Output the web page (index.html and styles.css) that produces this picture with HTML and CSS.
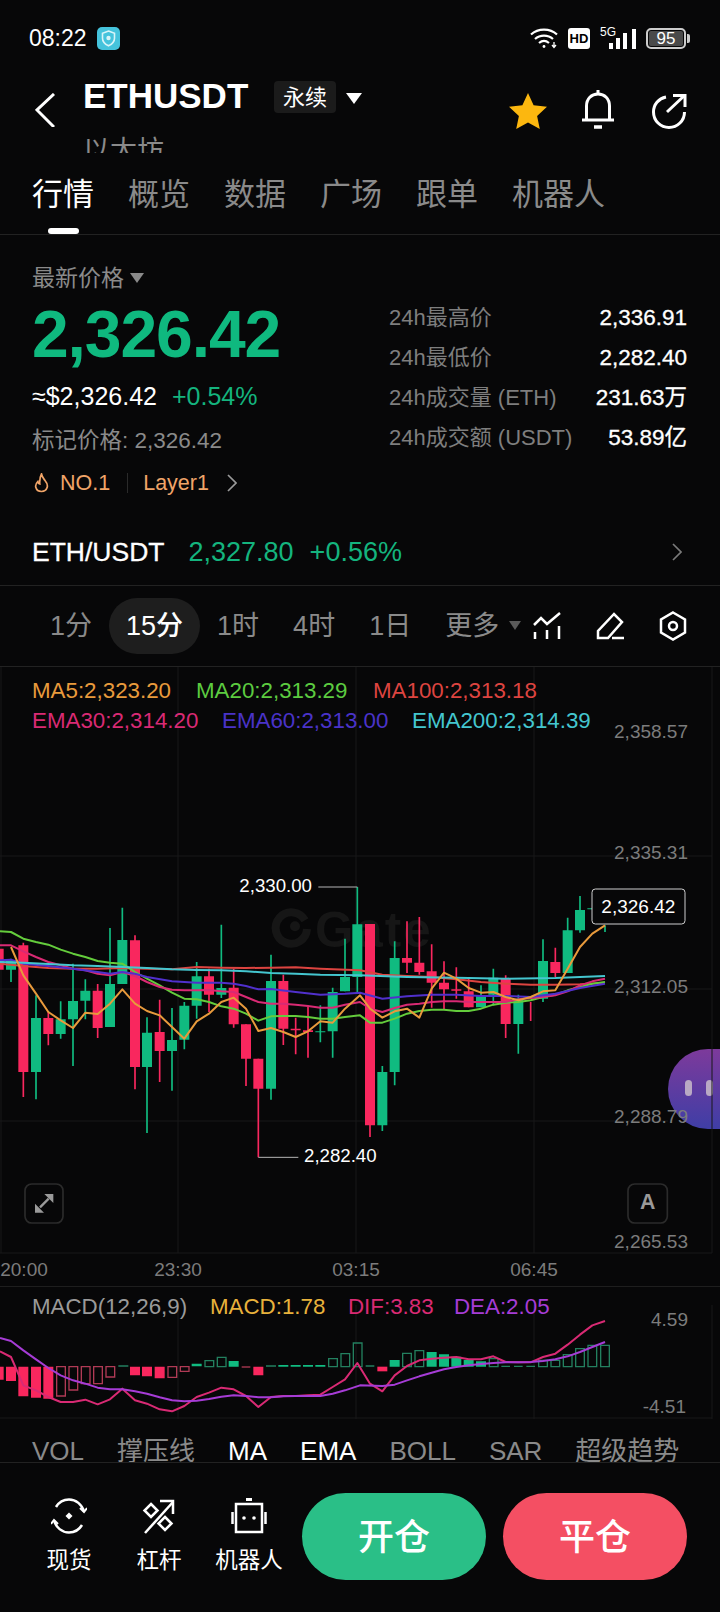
FILE: index.html
```html
<!DOCTYPE html>
<html>
<head>
    <meta charset="utf-8">
    <title>ETHUSDT</title>
    <link rel="stylesheet" href="styles.css">
</head>
<body>
<div class="status-bar">
    <div class="status-left">
        <span class="clock">08:22</span>
        <svg class="shield-app" viewBox="0 0 23 23">
            <rect width="23" height="23" rx="5" fill="#45c3dc"/>
            <path d="M11.5 4l6 2.2v5c0 3.6-2.6 6-6 7.6-3.4-1.6-6-4-6-7.6v-5z" fill="none" stroke="#d8f4f8" stroke-width="1.6"/>
            <circle cx="11.5" cy="11" r="2.2" fill="#d8f4f8"/>
        </svg>
    </div>
    <div class="status-right">
        <svg class="wifi" viewBox="0 0 28 22" fill="none" stroke="#fff" stroke-width="2.2">
            <path d="M1 7.5C8 1 20 1 27 7.5"/>
            <path d="M5 12c5-4.500 13-4.500 18 0"/>
            <path d="M9 16c3-2.500 7-2.500 10 0"/>
            <circle cx="14" cy="19.500" r="1.400" fill="#fff" stroke="none"/>
            <path d="M24 15v5M22 18l2 2.500 2-2.500" stroke-width="1.300"/>
        </svg>
        <span class="hd-badge">HD</span>
        <div class="signal">
            <span class="signal-type">5G</span>
            <svg class="signal-bars" viewBox="0 0 29 20" fill="#fff">
                <rect x="0" y="14" width="4" height="6"/>
                <rect x="7" y="9" width="4" height="11"/>
                <rect x="14" y="4" width="4" height="16"/>
                <rect x="23" y="0" width="4" height="20"/>
            </svg>
        </div>
        <div class="battery"><span class="battery-body">95</span><span class="battery-nub"></span></div>
    </div>
</div>

<div class="header">
    <svg class="back-icon" viewBox="0 0 20 34" fill="none" stroke="#fff" stroke-width="3"><path d="M19 1L2 17l17 17"/></svg>
    <div class="title-col">
        <div class="title">ETHUSDT</div>
        <div class="subtitle">以太坊</div>
    </div>
    <span class="perp-badge">永续</span>
    <span class="tri tri-white"></span>
    <div class="header-icons">
        <svg class="star" viewBox="0 0 38 36"><path d="M19 0l5.600 12.200L38 13.800l-9.900 9.100L30.800 36 19 29.400 7.200 36l2.700-13.100L0 13.800l13.400-1.600z" fill="#fcb70f"/></svg>
        <svg class="bell" viewBox="0 0 34 40" fill="none" stroke="#fff" stroke-width="3">
            <path d="M17 1v4"/>
            <path d="M5.500 30V17C5.500 9.500 10.500 5 17 5s11.500 4.500 11.500 12v13"/>
            <path d="M1 31h32"/>
            <path d="M13 38h8" stroke-width="3.500"/>
        </svg>
        <svg class="share" viewBox="0 0 35 36" fill="none" stroke="#fff" stroke-width="3">
            <path d="M14 4C6.500 5.500 1.500 11.500 1.500 19c0 8.800 7 15.500 15.500 15.500S32.500 27.800 32.500 19"/>
            <path d="M15 19L32.500 2.500"/>
            <path d="M21 2.500h12V14"/>
        </svg>
    </div>
</div>

<div class="tabs">
    <span class="tab active">行情</span>
    <span class="tab">概览</span>
    <span class="tab">数据</span>
    <span class="tab">广场</span>
    <span class="tab">跟单</span>
    <span class="tab">机器人</span>
</div>

<div class="market">
    <div class="market-left">
        <div class="last-label">最新价格<span class="tri tri-grey"></span></div>
        <div class="last-price">2,326.42</div>
        <div class="fiat"><span>≈$2,326.42</span><span class="green">+0.54%</span></div>
        <div class="mark-price">标记价格: 2,326.42</div>
        <div class="hot-row">
            <svg class="flame" viewBox="0 0 15 20" fill="none" stroke="#f0a468" stroke-width="1.700"><path d="M7.500 1c.5 3 1.500 4 3.500 6.500 2.500 3 2.700 5 2.200 6.800-.8 2.800-3 4.200-5.700 4.200s-5-1.400-5.700-4.200c-.5-2 .2-4 2-5.800.3 1.500 1 2.300 2 2.500C5.500 8 6 4 7.500 1z"/></svg>
            <span>NO.1</span>
            <span class="hot-sep"></span>
            <span>Layer1</span>
            <svg class="hot-chevron" viewBox="0 0 10 18" fill="none" stroke="#9a9a9a" stroke-width="1.700"><path d="M1 1l8 8-8 8"/></svg>
        </div>
    </div>
    <div class="stats">
        <div class="stat-row"><span class="stat-label">24h最高价</span><span class="stat-value">2,336.91</span></div>
        <div class="stat-row"><span class="stat-label">24h最低价</span><span class="stat-value">2,282.40</span></div>
        <div class="stat-row"><span class="stat-label">24h成交量 (ETH)</span><span class="stat-value">231.63万</span></div>
        <div class="stat-row"><span class="stat-label">24h成交额 (USDT)</span><span class="stat-value">53.89亿</span></div>
    </div>
</div>

<div class="spot-row">
    <span class="spot-name">ETH/USDT</span>
    <span class="green spot-price">2,327.80</span>
    <span class="green">+0.56%</span>
    <svg class="spot-chevron" viewBox="0 0 10 18" fill="none" stroke="#7a7a7a" stroke-width="1.700"><path d="M1 1l8 8-8 8"/></svg>
</div>

<div class="tools">
    <span class="period">1分</span>
    <span class="period active">15分</span>
    <span class="period">1时</span>
    <span class="period">4时</span>
    <span class="period">1日</span>
    <span class="period more">更多<span class="tri tri-dim"></span></span>
    <div class="tool-icons">
        <svg viewBox="0 0 28 28" fill="none" stroke="#fff" stroke-width="2.500">
            <path d="M1 13l7-7 6 6L27 1"/>
            <path d="M2 20v7M14 18v9M26 14v13"/>
        </svg>
        <svg viewBox="0 0 28 28" fill="none" stroke="#fff" stroke-width="2.500">
            <path d="M2 26v-7L18 2l8 8-14 16z"/>
            <path d="M16 26h12"/>
        </svg>
        <svg viewBox="0 0 28 30" fill="none" stroke="#fff" stroke-width="2.500">
            <path d="M14 1.500l12 7v13l-12 7-12-7v-13z"/>
            <circle cx="14" cy="15" r="4"/>
        </svg>
    </div>
</div>

<div class="chart">
    <div class="bubble"><span class="bubble-eye"></span><span class="bubble-eye"></span></div>
    <svg class="chart-svg" viewBox="0 0 2160 1860">
        <path class="grid" d="M3 0V1758M534 0V1758M1068 0V1758M1602 0V1758M2136 0V1758M0 567H2136M0 966H2136M0 1362H2004M0 1758H2136"/>
        <g class="watermark">
            <path class="wm-mark" d="M915 760a47 47 0 1 0 6 26"/>
            <circle cx="885" cy="778" r="15"/>
            <text x="945" y="786" class="wm-text">Gate</text>
        </g>

        <g transform="translate(0 585)">
            <path class="up wick" d="M33 290V360M108 400V712M182 418V530M219 305V612M256 352V472M330 198V495M367 137V366M441 466V813M516 438V686M553 420V562M590 300V470M664 188V408M813 278V713M961 430V541M998 377V587M1035 230V388M1072 75V390"/>
            <path class="up body" d="M33 295V323M108 468V630M182 472V516M219 417V472M256 386V416M330 366V495M367 234V366M441 512V615M516 534V567M553 431V533M590 343V431M664 378V398M813 357V680M961 508V511M998 390V508M1035 345V388M1072 187V345"/>
            <path class="down wick" d="M70 242V705M145 450V550M293 366V528M405 220V682M479 413V660M627 320V450M701 320V497M738 487V672M775 590V886M850 338V549M887 467V577M924 435V587"/>
            <path class="down body" d="M-4 260V323M70 250V630M145 468V516M293 386V498M405 235V615M479 510V567M627 343V398M701 377V487M738 487V590M775 590V680M850 357V500M887 500V505M924 505V510"/>
            <path class="note-line" d="M1072 75H955M775 886H895"/>
        </g>
        <g transform="translate(1080 585)">
            <path class="up wick" d="M67 612V807M104 238V670M363 370V436M400 320V430M475 398V575M549 232V420M623 167V333M660 102V212M697 139V142M735 190V210"/>
            <path class="up body" d="M67 630V790M104 288V630M363 400V436M400 347V398M475 410V486M549 297V410M623 205V333M660 144V205M697 139V142"/>
            <path class="down wick" d="M30 186V825M141 178V333M178 165V338M215 247V437M252 298V443M289 316V410M326 350V436M437 340V528M512 420V477M586 257V345"/>
            <path class="down body" d="M30 186V790M141 288V302M178 302V330M215 328V362M252 362V382M289 382V386M326 388V436M437 350V486M586 300V333"/>
        </g>

        <g transform="translate(0 585)" class="lines">
            <polyline class="l-ma100" points="0,305 70,312 145,318 219,320 293,320 367,318 441,320 516,322 590,315 664,317 738,318 813,317 887,316 961,320 1080,325 1147,338 1221,342 1295,345 1369,352 1443,360 1517,365 1592,368 1666,368 1740,367 1815,362"/>
            <polyline class="l-ma20" points="0,208 33,210 70,230 108,240 145,248 182,263 219,275 256,285 293,297 330,302 367,305 405,330 441,350 479,370 516,392 553,410 590,412 627,420 664,433 701,440 738,455 775,476 813,463 850,462 887,462 924,465 961,470 998,470 1035,465 1080,460 1110,482 1147,482 1184,470 1221,455 1258,447 1295,443 1332,443 1369,447 1406,447 1443,440 1480,428 1517,422 1555,420 1592,415 1629,405 1666,398 1703,385 1740,375 1777,365 1815,360"/>
            <polyline class="l-ema30" points="0,250 33,250 70,268 108,285 145,300 182,310 219,320 256,325 293,335 330,340 367,330 405,342 441,360 479,375 516,383 553,385 590,385 627,384 664,388 701,390 738,405 775,420 813,425 850,425 887,428 924,432 961,437 998,437 1035,428 1080,420 1110,440 1147,450 1184,438 1221,428 1258,425 1295,420 1332,418 1369,418 1406,420 1443,420 1480,420 1517,420 1555,412 1592,408 1629,405 1666,400 1703,388 1740,370 1777,358 1815,350"/>
            <polyline class="l-ema60" points="0,295 33,293 70,305 145,312 219,320 293,330 330,335 367,330 405,335 441,345 516,358 590,362 664,362 701,365 738,372 775,382 813,381 887,390 961,398 1035,395 1080,392 1147,410 1221,403 1295,398 1369,398 1443,402 1517,402 1592,405 1666,395 1740,378 1815,365"/>
            <polyline class="l-ema200" points="0,300 70,302 145,306 219,310 293,312 367,315 441,318 516,322 590,324 664,325 738,328 813,333 887,335 961,338 1080,340 1221,345 1369,347 1517,350 1666,348 1815,342"/>
            <polyline class="l-ma5" points="33,255 70,340 108,395 145,450 182,475 219,498 256,452 293,456 330,425 367,382 405,425 441,447 479,460 516,495 553,530 590,478 627,455 664,420 701,407 738,440 775,507 813,498 850,510 887,525 924,508 961,478 998,482 1035,440 1080,400 1110,440 1147,467 1184,448 1221,440 1258,467 1295,380 1332,332 1369,350 1406,378 1443,392 1480,390 1517,405 1555,415 1592,405 1629,388 1666,385 1703,320 1740,255 1777,215 1815,190"/>
        </g>

        <g class="legend">
            <text x="96" y="69" class="c-ma5">MA5:2,323.20</text>
            <text x="588" y="69" class="c-ma20">MA20:2,313.29</text>
            <text x="1119" y="69" class="c-ma100">MA100:2,313.18</text>
            <text x="96" y="159" class="c-ema30">EMA30:2,314.20</text>
            <text x="666" y="159" class="c-ema60">EMA60:2,313.00</text>
            <text x="1236" y="159" class="c-ema200">EMA200:2,314.39</text>
        </g>
        <g class="axis-y">
            <text x="2064" y="193">2,358.57</text>
            <text x="2064" y="556">2,335.31</text>
            <text x="2064" y="958">2,312.05</text>
            <text x="2064" y="1348">2,288.79</text>
            <text x="2064" y="1723">2,265.53</text>
        </g>
        <g class="axis-x">
            <text x="72" y="1807">20:00</text>
            <text x="534" y="1807">23:30</text>
            <text x="1068" y="1807">03:15</text>
            <text x="1602" y="1807">06:45</text>
        </g>
        <g class="notes">
            <text x="718" y="654">2,330.00</text>
            <text x="912" y="1466">2,282.40</text>
        </g>
        <rect class="price-box" x="1776" y="666" width="279" height="105" rx="10"/>
        <text class="price-box-text" x="1915" y="719">2,326.42</text>

        <g class="chart-btn">
            <rect x="75" y="1551" width="114" height="117" rx="20"/>
            <path class="expand-shaft" d="M120 1621l26-26"/>
            <path class="expand-head" d="M160 1581v27l-27-27zM105 1637v-27l27 27z"/>
        </g>
        <g class="chart-btn">
            <rect x="1884" y="1551" width="118" height="117" rx="20"/>
        </g>
        <text class="auto-a" x="1943" y="1606">A</text>
    </svg>
</div>

<div class="macd">
    <svg class="macd-svg" viewBox="0 0 2160 396">
        <path class="grid" d="M534 54V396M1068 54V396M1602 54V396M2136 54V396"/>
        <g transform="translate(0 -45)">
            <path class="down solid" d="M-4 284V323M33 284V327M70 284V373M108 284V377M145 284V380M405 284V310M441 284V313M479 284V319M775 284V310"/>
            <path class="hollow-down" d="M170 284h26v88h-26zM207 284h26v70h-26zM244 284h26v51h-26zM281 284h26v51h-26zM318 284h26v31h-26zM504 284h26v32h-26zM541 284h26v14h-26z"/>
            <path class="up solid" d="M590 275V283M701 267V284M850 279V284M887 279V284M924 279V284M961 279V284"/>
            <path class="hollow-up" d="M615 266h26v18h-26zM652 256h26v28h-26zM986 260h26v24h-26zM1023 245h26v39h-26zM1060 213h26v71h-26zM355 282h30M798 282h30"/>
            <path class="hollow-down" d="M725 285h26"/>
        </g>
        <g transform="translate(1080 -45)">
            <path class="down solid" d="M67 284V298"/>
            <path class="up solid" d="M104 264V284M215 240V284M252 247V284M289 254V284M326 264V284M363 268V284"/>
            <path class="hollow-up" d="M128 244h26v40h-26zM165 236h26v48h-26zM388 260h26v24h-26zM536 265h26v19h-26zM573 265h26v19h-26zM610 248h26v36h-26zM647 230h26v54h-26zM684 220h26v64h-26zM722 220h26v64h-26zM17 282h26M424 283h26M462 283h26M499 283h26"/>
        </g>
        <g transform="translate(0 -45)" class="lines">
            <polyline class="l-dif" points="0,238 33,255 70,340 108,355 145,375 182,390 219,390 256,383 293,397 330,382 367,350 405,385 441,395 479,412 516,418 553,402 590,375 627,362 664,347 701,352 738,372 775,405 813,375 850,372 887,372 924,370 961,368 998,345 1035,322 1072,273 1110,335 1147,358 1184,310 1221,282 1258,265 1295,260 1332,257 1369,255 1406,262 1443,262 1480,253 1517,270 1555,271 1592,271 1629,255 1666,245 1703,218 1740,188 1777,160 1815,147"/>
            <polyline class="l-dea" points="0,198 33,207 70,235 108,262 145,288 182,310 219,325 256,335 293,347 330,352 367,352 405,358 441,365 479,376 516,385 553,388 590,386 627,381 664,374 701,370 738,372 775,376 813,376 850,373 887,372 924,372 961,372 998,365 1035,355 1080,340 1147,342 1184,338 1221,325 1258,313 1295,302 1332,292 1369,285 1406,280 1443,276 1480,273 1517,271 1555,271 1592,270 1629,267 1666,262 1703,253 1740,240 1777,225 1815,210"/>
        </g>
        <path class="grid" d="M0 393H2136"/>
        <g class="legend">
            <text x="96" y="57" class="c-title">MACD(12,26,9)</text>
            <text x="630" y="57" class="c-macd">MACD:1.78</text>
            <text x="1044" y="57" class="c-dif">DIF:3.83</text>
            <text x="1362" y="57" class="c-dea">DEA:2.05</text>
        </g>
        <g class="axis-y">
            <text x="2064" y="97">4.59</text>
            <text x="2058" y="357">-4.51</text>
        </g>
    </svg>
</div>

<div class="indicators">
    <span>VOL</span>
    <span>撑压线</span>
    <span class="on">MA</span>
    <span class="on">EMA</span>
    <span>BOLL</span>
    <span>SAR</span>
    <span>超级趋势</span>
</div>

<div class="bottom-bar">
    <div class="action">
        <svg viewBox="0 0 36 36" fill="none" stroke="#fff" stroke-width="2.500">
            <path d="M5 9C8 4 13 1.500 18 1.500c7 0 13 5 15 12"/>
            <path d="M31 27c-3 5-8 7.500-13 7.500-7 0-13-5-15-12"/>
            <path d="M29 10l4 4 3-4M7 26l-4-4-3 4" stroke-width="2"/>
            <path d="M18 14.500l3.500 3.500-3.500 3.500-3.500-3.500z" fill="#fff" stroke="none"/>
        </svg>
        <span>现货</span>
    </div>
    <div class="action">
        <svg viewBox="0 0 36 36" fill="none" stroke="#fff" stroke-width="2.500">
            <path d="M4 35L32 4"/>
            <path d="M19 3h13v13"/>
            <path d="M10 6l6.500 6.500L10 19 3.500 12.500z"/>
            <path d="M24 19l6.500 6.500L24 32l-6.500-6.500z"/>
        </svg>
        <span>杠杆</span>
    </div>
    <div class="action">
        <svg viewBox="0 0 36 36" fill="none" stroke="#fff" stroke-width="2.500">
            <path d="M15 1.500h6" stroke-width="3"/>
            <path d="M5 6h26v28H5z"/>
            <path d="M1.500 14v12M34.500 14v12"/>
            <circle cx="13" cy="20" r="1.800" fill="#fff" stroke="none"/>
            <circle cx="23" cy="20" r="1.800" fill="#fff" stroke="none"/>
        </svg>
        <span>机器人</span>
    </div>
    <button class="trade-btn open">开仓</button>
    <button class="trade-btn close">平仓</button>
</div>
</body>
</html>
```

FILE: styles.css
```css
* {
    box-sizing: border-box;
}

body {
    margin: 0;
    width: 720px;
    height: 1612px;
    overflow: hidden;
    position: relative;
    background-color: #070708;
    color: #fff;
    font-family: "Liberation Sans", "Noto Sans CJK SC", sans-serif;
}

.green {
    color: #14b47e;
}

.tri {
    display: inline-block;
    width: 0;
    height: 0;
    border-left: 8px solid transparent;
    border-right: 8px solid transparent;
    border-top: 11px solid #fff;
}

.tri-grey {
    border-left-width: 7px;
    border-right-width: 7px;
    border-top: 10px solid #8a8a8a;
    margin-left: 6px;
    vertical-align: 3px;
}

.tri-dim {
    border-left-width: 6px;
    border-right-width: 6px;
    border-top: 9px solid #5a5a5a;
    margin-left: 10px;
    vertical-align: 5px;
}

/* status bar */
.status-bar {
    height: 76px;
    padding: 0 30px 0 29px;
    display: flex;
    justify-content: space-between;
    align-items: center;
}

.status-left {
    display: flex;
    align-items: center;
    gap: 10px;
}

.clock {
    font-size: 23px;
}

.shield-app {
    width: 23px;
    height: 23px;
}

.status-right {
    display: flex;
    align-items: center;
}

.wifi {
    width: 28px;
    height: 22px;
}

.hd-badge {
    margin-left: 10px;
    width: 22px;
    height: 21px;
    background-color: #fff;
    color: #000;
    border-radius: 3px;
    font-size: 13px;
    font-weight: 700;
    line-height: 21px;
    text-align: center;
}

.signal {
    position: relative;
    width: 38px;
    height: 21px;
    margin-left: 10px;
}

.signal-type {
    position: absolute;
    left: 0;
    top: -2px;
    font-size: 12px;
    line-height: 13px;
}

.signal-bars {
    position: absolute;
    left: 9px;
    top: 1px;
    width: 29px;
    height: 20px;
}

.battery {
    margin-left: 8px;
    display: flex;
    align-items: center;
}

.battery-body {
    width: 40px;
    height: 21px;
    border: 2px solid #ccc;
    border-radius: 5px;
    background-color: #4a4a4a;
    box-shadow: inset 0 0 0 1px #070708;
    font-size: 17px;
    line-height: 17px;
    text-align: center;
}

.battery-nub {
    width: 3px;
    height: 9px;
    margin-left: 1px;
    background-color: #ccc;
    border-radius: 0 2px 2px 0;
}

/* header */
.header {
    height: 77px;
    position: relative;
    overflow: hidden;
    display: flex;
    align-items: flex-start;
}

.back-icon {
    width: 20px;
    height: 34px;
    margin: 17px 0 0 35px;
}

.title-col {
    width: 191px;
    margin-left: 28px;
}

.title {
    font-size: 35px;
    font-weight: 700;
    line-height: 40px;
    white-space: nowrap;
}

.subtitle {
    margin-top: 16px;
    font-size: 27px;
    line-height: 38px;
    color: #8a8a8a;
}

.perp-badge {
    margin-top: 5px;
    width: 62px;
    height: 32px;
    background-color: #1b1b1b;
    border-radius: 4px;
    font-size: 22px;
    line-height: 34px;
    text-align: center;
}

.header .tri {
    margin: 17px 0 0 10px;
}

.header-icons {
    position: absolute;
    right: 33px;
    top: 13px;
    display: flex;
    align-items: center;
    gap: 34px;
}

.star {
    width: 38px;
    height: 36px;
    margin-top: 3px;
}

.bell {
    width: 34px;
    height: 40px;
}

.share {
    width: 35px;
    height: 36px;
    margin: 3px 0 0 3px;
}

/* tabs */
.tabs {
    height: 82px;
    padding: 0 0 0 32px;
    display: flex;
    gap: 34px;
    border-bottom: 1px solid #222;
}

.tab {
    position: relative;
    font-size: 31px;
    line-height: 84px;
    height: 81px;
    color: #8a8a8a;
    white-space: nowrap;
}

.tab.active {
    color: #fff;
}

.tab.active::after {
    content: "";
    position: absolute;
    left: 16px;
    bottom: 0;
    width: 31px;
    height: 6px;
    background-color: #fff;
    border-radius: 3px;
}

/* market info */
.market {
    display: flex;
    height: 266px;
    padding-left: 32px;
}

.market-left {
    width: 357px;
    padding-top: 28px;
}

.last-label {
    font-size: 23px;
    line-height: 30px;
    color: #8a8a8a;
}

.last-price {
    margin-top: 1px;
    font-size: 66px;
    font-weight: 700;
    line-height: 80px;
    letter-spacing: -1.1px;
    color: #0fb97f;
    white-space: nowrap;
}

.fiat {
    margin-top: 6px;
    font-size: 25px;
    line-height: 32px;
    display: flex;
    gap: 15px;
    white-space: nowrap;
}

.mark-price {
    margin-top: 13px;
    font-size: 22.500px;
    line-height: 32px;
    color: #8a8a8a;
    white-space: nowrap;
}

.hot-row {
    margin-top: 10px;
    display: flex;
    align-items: center;
    font-size: 21.500px;
    line-height: 32px;
    color: #f0a468;
}

.flame {
    width: 15px;
    height: 20px;
    margin: 0 11px 0 2px;
}

.hot-sep {
    width: 1px;
    height: 20px;
    margin: 0 15px 0 17px;
    background-color: #2a2a2a;
}

.hot-chevron {
    width: 10px;
    height: 18px;
    margin-left: 18px;
}

.stats {
    width: 298px;
    padding-top: 63px;
}

.stat-row {
    display: flex;
    justify-content: space-between;
    font-size: 22px;
    line-height: 40px;
    white-space: nowrap;
}

.stat-label {
    color: #7e7e7e;
}

.stat-value {
    font-size: 22.500px;
    -webkit-text-stroke: 0.3px #fff;
}

.spot-row {
    height: 85px;
    padding: 18px 38px 0 32px;
    display: flex;
    align-items: center;
    font-size: 27px;
    border-bottom: 1px solid #222;
}

.spot-name {
    margin-right: 24px;
    font-size: 26.500px;
    -webkit-text-stroke: 0.3px #fff;
}

.spot-price {
    margin-right: 16px;
}

.spot-chevron {
    width: 10px;
    height: 18px;
    margin-left: auto;
}

/* period tools */
.tools {
    height: 81px;
    padding: 0 33px;
    display: flex;
    align-items: center;
    border-bottom: 1px solid #222;
}

.period {
    height: 56px;
    padding: 0 17px;
    border-radius: 28px;
    font-size: 27px;
    line-height: 56px;
    color: #8a8a8a;
    white-space: nowrap;
}

.period.active {
    background-color: #1e1e1e;
    color: #fff;
    font-weight: 500;
}

.period.more {
    padding-right: 0;
}

.tool-icons {
    margin-left: auto;
    display: flex;
    gap: 35px;
}

.tool-icons svg {
    width: 28px;
    height: 30px;
}

/* chart */
.chart {
    position: relative;
    height: 620px;
    border-bottom: 1px solid #1e1e1e;
}

.chart-svg {
    position: relative;
    display: block;
    width: 720px;
    height: 620px;
}

.bubble {
    position: absolute;
    right: 0;
    top: 382px;
    width: 52px;
    height: 80px;
    padding: 31px 0 0 17px;
    border-radius: 40px 0 0 40px;
    background: linear-gradient(180deg, #7d3a9b 0%, #3f3ea6 100%);
    display: flex;
    gap: 14px;
}

.bubble-eye {
    width: 7px;
    height: 16px;
    border-radius: 4px;
    background-color: #b9a9c4;
}

.grid {
    stroke: #191919;
    stroke-width: 3;
    fill: none;
}

.watermark {
    fill: #161616;
}

.wm-mark {
    fill: none;
    stroke: #161616;
    stroke-width: 24;
}

.wm-text {
    font-size: 148px;
    font-weight: 700;
    letter-spacing: 6px;
    dominant-baseline: central;
}

.wick {
    fill: none;
    stroke-width: 5;
}

.body, .solid {
    fill: none;
    stroke-width: 30;
}

.up {
    stroke: #10bb80;
}

.down {
    stroke: #f9275e;
}

.note-line {
    fill: none;
    stroke: #b5b5b5;
    stroke-width: 3;
}

.lines polyline {
    fill: none;
    stroke-width: 6;
    stroke-linejoin: round;
}

.l-ma5 { stroke: #e89a3c; }
.l-ma20 { stroke: #64cc3c; }
.l-ma100 { stroke: #dd4440; }
.l-ema30 { stroke: #d92a74; }
.l-ema60 { stroke: #5030cc; }
.l-ema200 { stroke: #44c6cf; }
.l-dif { stroke: #d92a74; }
.l-dea { stroke: #a63cd6; }

.legend text {
    font-size: 67px;
    dominant-baseline: central;
}

.c-ma5 { fill: #e89a3c; }
.c-ma20 { fill: #5ccb40; }
.c-ma100 { fill: #dd4440; }
.c-ema30 { fill: #d92a74; }
.c-ema60 { fill: #4a33c8; }
.c-ema200 { fill: #44c6cf; }
.c-title { fill: #9a9a9a; }
.c-macd { fill: #e8b23c; }
.c-dif { fill: #d92a74; }
.c-dea { fill: #a63cd6; }

.axis-y text {
    font-size: 57px;
    fill: #7c7c7c;
    text-anchor: end;
    dominant-baseline: central;
}

.axis-x text {
    font-size: 57px;
    fill: #7c7c7c;
    text-anchor: middle;
    dominant-baseline: central;
}

.notes text {
    font-size: 56px;
    fill: #fff;
    dominant-baseline: central;
}

.price-box {
    fill: #070708;
    stroke: #cfcfcf;
    stroke-width: 3;
}

.price-box-text {
    font-size: 57px;
    fill: #fff;
    text-anchor: middle;
    dominant-baseline: central;
}

.chart-btn rect {
    fill: none;
    stroke: #2b2b2b;
    stroke-width: 5;
}

.expand-shaft {
    fill: none;
    stroke: #9a9a9a;
    stroke-width: 7;
}

.expand-head {
    fill: #9a9a9a;
}

.auto-a {
    font-size: 64px;
    font-weight: 700;
    fill: #9a9a9a;
    text-anchor: middle;
    dominant-baseline: central;
}

/* macd */
.macd {
    height: 132px;
}

.macd-svg {
    display: block;
    width: 720px;
    height: 132px;
}

.hollow-down {
    fill: none;
    stroke: #b03a55;
    stroke-width: 4;
}

.hollow-up {
    fill: none;
    stroke: #23805f;
    stroke-width: 4;
}

/* indicator switcher */
.indicators {
    height: 44px;
    padding: 10px 0 0 32px;
    display: flex;
    gap: 33px;
    overflow: hidden;
    font-size: 26px;
    line-height: 44px;
    color: #8a8a8a;
    border-bottom: 1px solid #222;
    white-space: nowrap;
}

.indicators .on {
    color: #fff;
}

/* bottom */
.bottom-bar {
    padding: 30px 33px 0 24px;
    display: flex;
    align-items: flex-start;
}

.action {
    width: 90px;
    display: flex;
    flex-direction: column;
    align-items: center;
    padding-top: 5px;
    font-size: 22.500px;
    line-height: 32px;
    white-space: nowrap;
}

.action svg {
    width: 36px;
    height: 36px;
    margin-bottom: 11px;
}

.trade-btn {
    width: 184px;
    height: 87px;
    margin-left: 17px;
    padding: 0 0 6px;
    border: none;
    border-radius: 44px;
    color: #fff;
    font-family: "Liberation Sans", "Noto Sans CJK SC", sans-serif;
    font-size: 36px;
    font-weight: 500;
}

.trade-btn.open {
    margin-left: 8px;
    background-color: #2abf87;
}

.trade-btn.close {
    background-color: #f44f63;
}
```
